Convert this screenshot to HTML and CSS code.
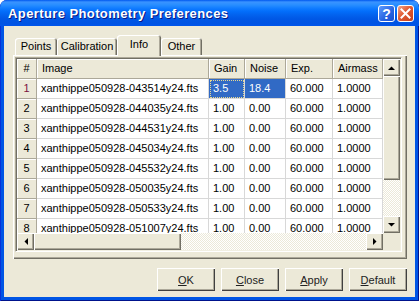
FILE: index.html
```html
<!DOCTYPE html>
<html lang="en">
<head>
    <meta charset="UTF-8">
    <meta name="viewport" content="width=device-width, initial-scale=1.0">
    <title>Aperture Photometry Preferences</title>
    <link rel="stylesheet" href="styles.css">
</head>
<body>

<div class="window">
    <div class="titlebar">
        <span class="title">Aperture Photometry Preferences</span>
        <div class="caption-buttons">
            <div class="caption-btn help-btn">?</div>
            <div class="caption-btn close-btn">
                <svg width="11" height="11" viewBox="0 0 11 11">
                    <path d="M1.5 1.5 L9.5 9.5 M9.5 1.5 L1.5 9.5" stroke="white" stroke-width="2" stroke-linecap="square"/>
                </svg>
            </div>
        </div>
    </div>

    <div class="client">
        <div class="tabs">
            <div class="tab tab-points">Points</div>
            <div class="tab tab-calibration">Calibration</div>
            <div class="tab tab-info active">Info</div>
            <div class="tab tab-other">Other</div>
        </div>

        <div class="panel">
            <div class="grid">
                <div class="grid-body">
                    <div class="grid-view">
                        <table>
                            <colgroup>
                                <col class="col-num">
                                <col class="col-image">
                                <col class="col-gain">
                                <col class="col-noise">
                                <col class="col-exp">
                                <col class="col-airmass">
                            </colgroup>
                            <tr>
                                <th class="center">#</th>
                                <th>Image</th>
                                <th>Gain</th>
                                <th>Noise</th>
                                <th>Exp.</th>
                                <th>Airmass</th>
                            </tr>
                            <tr>
                                <th class="center current">1</th>
                                <td>xanthippe050928-043514y24.fts</td>
                                <td class="selected focused">3.5</td>
                                <td class="selected">18.4</td>
                                <td>60.000</td>
                                <td>1.0000</td>
                            </tr>
                            <tr>
                                <th class="center">2</th>
                                <td>xanthippe050928-044035y24.fts</td>
                                <td>1.00</td>
                                <td>0.00</td>
                                <td>60.000</td>
                                <td>1.0000</td>
                            </tr>
                            <tr>
                                <th class="center">3</th>
                                <td>xanthippe050928-044531y24.fts</td>
                                <td>1.00</td>
                                <td>0.00</td>
                                <td>60.000</td>
                                <td>1.0000</td>
                            </tr>
                            <tr>
                                <th class="center">4</th>
                                <td>xanthippe050928-045034y24.fts</td>
                                <td>1.00</td>
                                <td>0.00</td>
                                <td>60.000</td>
                                <td>1.0000</td>
                            </tr>
                            <tr>
                                <th class="center">5</th>
                                <td>xanthippe050928-045532y24.fts</td>
                                <td>1.00</td>
                                <td>0.00</td>
                                <td>60.000</td>
                                <td>1.0000</td>
                            </tr>
                            <tr>
                                <th class="center">6</th>
                                <td>xanthippe050928-050035y24.fts</td>
                                <td>1.00</td>
                                <td>0.00</td>
                                <td>60.000</td>
                                <td>1.0000</td>
                            </tr>
                            <tr>
                                <th class="center">7</th>
                                <td>xanthippe050928-050533y24.fts</td>
                                <td>1.00</td>
                                <td>0.00</td>
                                <td>60.000</td>
                                <td>1.0000</td>
                            </tr>
                            <tr>
                                <th class="center">8</th>
                                <td>xanthippe050928-051007y24.fts</td>
                                <td>1.00</td>
                                <td>0.00</td>
                                <td>60.000</td>
                                <td>1.0000</td>
                            </tr>
                        </table>
                    </div>

                    <div class="vscroll">
                        <div class="sb-btn">
                            <svg width="7" height="4" viewBox="0 0 7 4"><polygon points="0,4 7,4 3.5,0.5" fill="black"/></svg>
                        </div>
                        <div class="sb-thumb vthumb"></div>
                        <div class="sb-track"></div>
                        <div class="sb-btn">
                            <svg width="7" height="4" viewBox="0 0 7 4"><polygon points="0,0 7,0 3.5,3.5" fill="black"/></svg>
                        </div>
                    </div>

                    <div class="hscroll">
                        <div class="sb-btn">
                            <svg width="4" height="7" viewBox="0 0 4 7"><polygon points="4,0 4,7 0.5,3.5" fill="black"/></svg>
                        </div>
                        <div class="sb-thumb hthumb"></div>
                        <div class="sb-track"></div>
                        <div class="sb-btn">
                            <svg width="4" height="7" viewBox="0 0 4 7"><polygon points="0,0 0,7 3.5,3.5" fill="black"/></svg>
                        </div>
                    </div>

                    <div class="corner"></div>
                </div>
            </div>
        </div>

        <div class="dialog-buttons">
            <button><u>O</u>K</button>
            <button><u>C</u>lose</button>
            <button><u>A</u>pply</button>
            <button><u>D</u>efault</button>
        </div>
    </div>
</div>

</body>
</html>
```

FILE: styles.css
```css
body {
    margin: 0;
    background-color: white;
    font-family: "Liberation Sans", Arial, sans-serif;
    font-size: 11px;
    color: black;
}

/* window frame */

.window {
    width: 419px;
    height: 301px;
    box-sizing: border-box;
    display: flex;
    flex-direction: column;
    background-color: #0055E5;
    border-radius: 7px 7px 0 0;
    box-shadow: inset 1px 0 #0831D9, inset -1px -1px #00138C;
    overflow: hidden;
}

.titlebar {
    height: 26px;
    display: flex;
    align-items: flex-start;
    padding: 0 5px 0 8px;
    background: linear-gradient(to bottom,
        #0058EE 0, #3A93FF 2px, #288EFF 5px, #127DFF 8px,
        #036FFC 11px, #0262EE 15px, #0057E5 19px, #0054E3 23px, #0055EB 26px);
    border-radius: 7px 7px 0 0;
}

.title {
    margin-top: 6px;
    color: white;
    font-weight: bold;
    font-size: 13px;
    letter-spacing: 0.4px;
    text-shadow: 1px 1px #0A1883;
}

.caption-buttons {
    margin-left: auto;
    margin-top: 5px;
    display: flex;
    gap: 2px;
}

.caption-btn {
    width: 17px;
    height: 17px;
    box-sizing: border-box;
    border: 1px solid white;
    border-radius: 3px;
    display: flex;
    align-items: center;
    justify-content: center;
}

.help-btn {
    background: linear-gradient(135deg, #5E9BFF, #2663E0 60%, #1B4FCF);
    color: white;
    font: bold 14px "Liberation Sans", Arial, sans-serif;
}

.close-btn {
    background: linear-gradient(135deg, #F0A68C, #E15A33 45%, #C4401C);
}

/* dialog client area */

.client {
    flex: 1;
    margin: 0 4px 4px;
    padding: 9px 8px 0 9px;
    background-color: #ECE9D8;
}

.tabs {
    display: flex;
    align-items: flex-end;
    height: 20px;
    padding-left: 2px;
}

.tab {
    height: 17px;
    line-height: 17px;
    text-align: center;
    background-color: #ECE9D8;
    border-radius: 3px 3px 0 0;
    box-shadow: inset 1px 1px #fff, inset -1px 0 #716F64, inset -2px 0 #ACA899;
}

.tab.active {
    height: 21px;
    line-height: 18px;
    margin-bottom: -1px;
    position: relative;
    z-index: 1;
}

.tab-points { width: 42px; }
.tab-calibration { width: 60px; }
.tab-info { width: 44px; }
.tab-other { width: 41px; }

.panel {
    height: 204px;
    box-sizing: border-box;
    padding: 2px 0 0 2px;
    background-color: #ECE9D8;
    box-shadow: inset 1px 1px #fff, inset -1px -1px #716F64, inset -2px -2px #ACA899;
}

/* grid */

.grid {
    width: 387px;
    height: 195px;
    box-sizing: border-box;
    padding: 1px;
    border: 1px solid;
    border-color: #ACA899 #fff #fff #ACA899;
    box-shadow: inset 1px 1px #716F64, inset -1px -1px #F1EFE2;
}

.grid-body {
    display: grid;
    grid-template-columns: 366px 17px;
    grid-template-rows: 174px 17px;
    background-color: #ECE9D8;
}

.grid-view {
    overflow: hidden;
    background-color: white;
}

table {
    width: 366px;
    table-layout: fixed;
    border-collapse: separate;
    border-spacing: 0;
}

.col-num { width: 20px; }
.col-image { width: 172px; }
.col-gain { width: 36px; }
.col-noise { width: 41px; }
.col-exp { width: 47px; }
.col-airmass { width: 50px; }

th, td {
    height: 19px;
    padding: 0 4px;
    line-height: 19px;
    text-align: left;
    font-weight: normal;
    white-space: nowrap;
    overflow: hidden;
}

th {
    background-color: #ECE9D8;
    border-right: 1px solid #ACA899;
    border-bottom: 1px solid #ACA899;
    box-shadow: inset 1px 1px #fff;
    padding-left: 5px;
}

td {
    border-right: 1px solid #D8D8D8;
    border-bottom: 1px solid #D8D8D8;
}

th.center {
    text-align: center;
    padding: 0;
}

th.current {
    color: #7A1040;
}

td.selected {
    background-color: #316AC5;
    color: white;
}

td.focused {
    outline: 1px dotted #E8D890;
    outline-offset: -2px;
}

/* scrollbars */

.vscroll {
    display: flex;
    flex-direction: column;
}

.hscroll {
    display: flex;
}

.sb-btn {
    width: 17px;
    height: 17px;
    flex-shrink: 0;
    display: flex;
    align-items: center;
    justify-content: center;
    background-color: #ECE9D8;
    box-shadow: inset 1px 1px #fff, inset -1px -1px #716F64, inset -2px -2px #ACA899;
}

.sb-thumb {
    flex-shrink: 0;
    background-color: #ECE9D8;
    box-shadow: inset 1px 1px #fff, inset -1px -1px #716F64, inset -2px -2px #ACA899;
}

.vthumb { height: 104px; }
.hthumb { width: 147px; }

.sb-track {
    flex: 1;
    background: repeating-conic-gradient(#fff 0 25%, #ECE9D8 0 50%) 0 0 / 2px 2px;
}

.corner {
    background-color: #ECE9D8;
}

/* dialog buttons */

.dialog-buttons {
    display: flex;
    justify-content: flex-end;
    gap: 6px;
    margin-top: 9px;
}

.dialog-buttons button {
    width: 58px;
    height: 23px;
    padding: 0;
    border: none;
    background-color: #ECE9D8;
    font-family: "Liberation Sans", Arial, sans-serif;
    font-size: 11px;
    font-weight: normal;
    color: #222;
    box-shadow: inset 1px 1px #fff, inset -1px -1px #404040, inset -2px -2px #ACA899;
}
```
